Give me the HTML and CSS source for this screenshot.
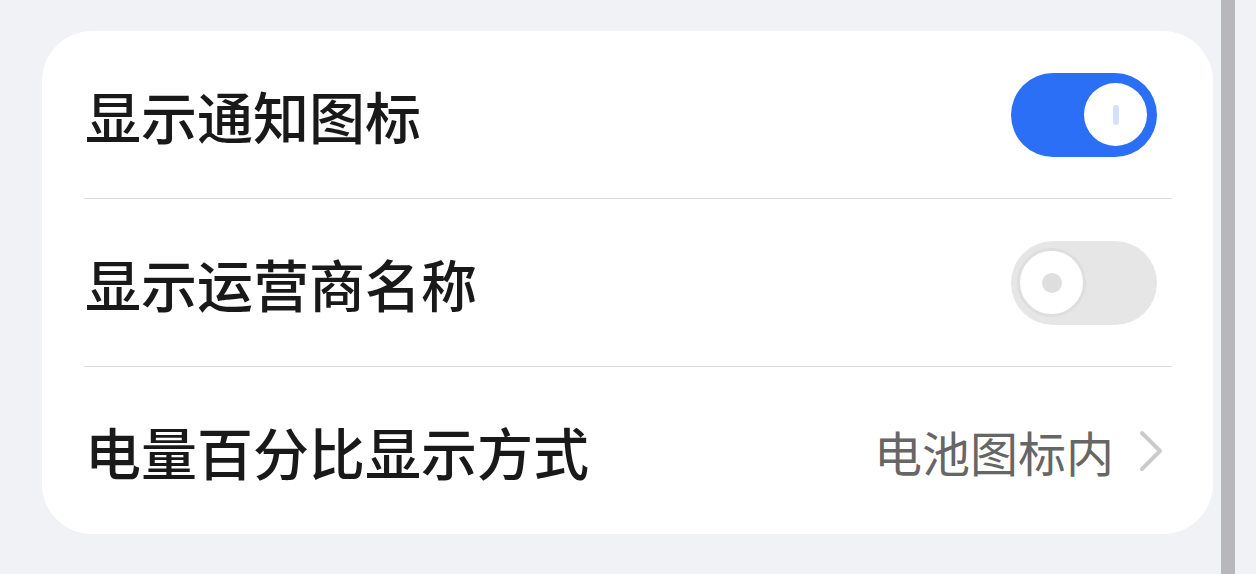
FILE: index.html
```html
<!DOCTYPE html>
<html lang="zh-CN">
<head>
<meta charset="UTF-8">
<meta name="viewport" content="width=device-width, initial-scale=1.0">
<title>状态栏设置</title>
<link rel="stylesheet" href="styles.css">
</head>
<body>
<div class="page">
    <div class="content">
        <div class="card">
            <div class="row">
                <span class="title">显示通知图标</span>
                <div class="switch on"><div class="knob"><span class="mark"></span></div></div>
            </div>
            <div class="row">
                <span class="title">显示运营商名称</span>
                <div class="switch off"><div class="knob"><span class="dot"></span></div></div>
            </div>
            <div class="row">
                <span class="title">电量百分比显示方式</span>
                <div class="value">
                    <span class="value-text">电池图标内</span>
                    <svg class="chevron" width="26" height="44" viewBox="0 0 26 44">
                        <path d="M4 4 L22 22 L4 40" fill="none" stroke="#cbcbcb" stroke-width="4" stroke-linecap="round" stroke-linejoin="round"/>
                    </svg>
                </div>
            </div>
        </div>
    </div>
    <div class="scrollbar"></div>
</div>
</body>
</html>
```
FILE: styles.css
```css
body {
    margin: 0;
    padding: 0;
    background-color: #f1f2f6;
    font-family: "Noto Sans CJK SC", "Noto Sans", sans-serif;
}
.page {
    display: flex;
    height: 574px;
    overflow: hidden;
}
.content {
    width: 1221px;
    padding: 31px 0 0 42px;
    box-sizing: border-box;
}
.card {
    width: 1171px;
    background-color: #fff;
    border-radius: 50px;
    padding: 0 41px 0 42px;
    box-sizing: border-box;
}
.row {
    height: 167px;
    display: flex;
    align-items: center;
    justify-content: space-between;
    border-bottom: 1px solid #dcdcdf;
}
.row:last-child {
    border-bottom: none;
}
.title {
    font-size: 56px;
    font-weight: 500;
    color: #191919;
    line-height: 1;
    padding-left: 1px;
}
.switch {
    width: 146px;
    height: 84px;
    border-radius: 42px;
    display: flex;
    align-items: center;
    box-sizing: border-box;
    margin-right: 15px;
}
.switch.on {
    background-color: #2b6ff6;
    justify-content: flex-end;
    padding-right: 10px;
}
.switch.off {
    background-color: #e6e6e6;
    padding-left: 6px;
}
.knob {
    width: 63px;
    height: 63px;
    border-radius: 50%;
    background-color: #fff;
    display: flex;
    align-items: center;
    justify-content: center;
}
.switch.off .knob {
    border: 3px solid #dedede;
}
.mark {
    width: 6px;
    height: 20px;
    border-radius: 3px;
    background-color: #d5e1fb;
}
.dot {
    width: 20px;
    height: 20px;
    border-radius: 50%;
    background-color: #dedede;
}
.value {
    display: flex;
    align-items: center;
    gap: 24px;
}
.value-text {
    font-size: 48px;
    color: #666;
    line-height: 1;
}
.chevron {
    display: block;
    margin-right: 8px;
}
.scrollbar {
    width: 14px;
    background-color: #b8b7bb;
}
```
